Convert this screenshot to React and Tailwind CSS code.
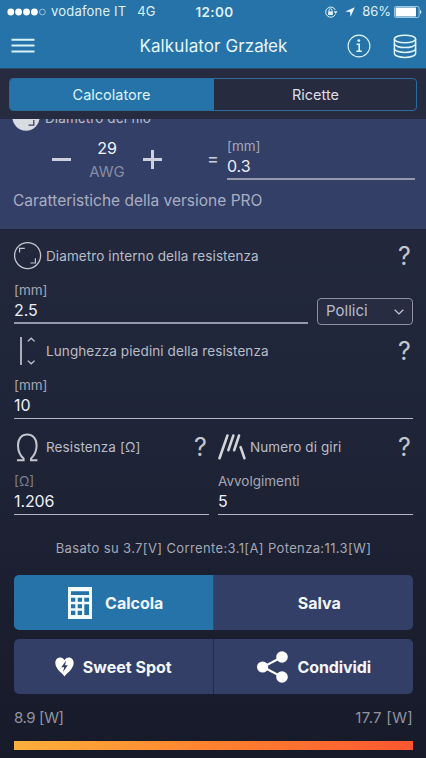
import React, { useState } from 'react';

const MenuIcon = () => (
  <svg width="24" height="16" viewBox="0 0 24 16" stroke="#d9f3fb" strokeWidth="2">
    <path d="M0.5 1.7H23.5M0.5 7.6H23.5M0.5 13.4H23.5" />
  </svg>
);

const InfoIcon = () => (
  <svg width="24" height="24" viewBox="0 0 24 24" fill="none" stroke="#dff5fc">
    <circle cx="12" cy="12" r="10.9" strokeWidth="1.1" />
    <circle cx="11.8" cy="6.6" r="1.4" fill="#dff5fc" stroke="none" />
    <path d="M9.6 10.2H12.2V17.4M9.4 17.3H14.8" strokeWidth="1.6" />
  </svg>
);

const DatabaseIcon = () => (
  <svg width="24" height="25" viewBox="0 0 24 25" fill="none" stroke="#dff5fc" strokeWidth="1.5">
    <ellipse cx="12" cy="5" rx="10.6" ry="3.8" />
    <path d="M1.4 5V19.4C1.4 21.5 6 23.4 12 23.4S22.6 21.5 22.6 19.4V5" />
    <path d="M1.4 9.6C1.4 11.9 6 13.6 12 13.6S22.6 11.9 22.6 9.6M1.4 14.4C1.4 16.7 6 18.4 12 18.4S22.6 16.7 22.6 14.4" />
  </svg>
);

const LockIcon = () => (
  <svg width="14" height="12" viewBox="0 0 14 12" fill="none" stroke="#dff1fa">
    <path d="M11.3 8.5A5.1 5.1 0 1 1 11.4 4" strokeWidth="1" />
    <path d="M9.6 5.3H13.6L11.6 8Z" fill="#dff1fa" stroke="none" />
    <rect x="4.1" y="5.3" width="4.8" height="3.7" fill="#dff1fa" stroke="none" />
    <path d="M5 5.5V4.2A1.5 1.5 0 0 1 8 4.2V5.5" strokeWidth="0.9" />
  </svg>
);

const LocationIcon = () => (
  <svg width="10" height="10" viewBox="0 0 10 10" fill="#e8f6fd">
    <path d="M9.8 0.2L5.6 9.8L5 5L0.2 4.4Z" />
  </svg>
);

const BatteryIcon = () => (
  <svg width="28" height="12" viewBox="0 0 28 12">
    <rect x="0.5" y="0.5" width="24.6" height="11" rx="1.6" fill="none" stroke="#a9d3ec" strokeWidth="0.9" />
    <rect x="1.6" y="1.6" width="20.4" height="8.8" rx="0.6" fill="#fff" />
    <path d="M26 4C27.8 4.4 27.8 7.6 26 8Z" fill="#cfe9f7" />
  </svg>
);

const DiameterIcon = () => (
  <svg width="28" height="28" viewBox="0 0 28 28" fill="none" stroke="#c3c6cf">
    <circle cx="13.6" cy="13.6" r="13" strokeWidth="1.3" />
    <path d="M5.6 10.5V6.4H10.8M16.5 21H21.4V16.2" strokeWidth="1.2" />
  </svg>
);

const WireIcon = () => (
  <svg width="28" height="28" viewBox="0 0 28 28">
    <circle cx="14" cy="14" r="13.7" fill="#dadce3" />
    <path d="M16.5 22.2H21.8V17" fill="none" stroke="#3a4266" strokeWidth="1.3" />
  </svg>
);

const LegsIcon = () => (
  <svg width="28" height="28" viewBox="0 0 28 28" fill="none" stroke="#c3c6cf">
    <path d="M7 0V28" strokeWidth="1.7" />
    <path d="M13.8 4.4L17.2 1.2L20.6 4.4M13.8 23.6L17.2 26.8L20.6 23.6" strokeWidth="1.3" />
  </svg>
);

const OhmIcon = () => (
  <svg width="28" height="29" viewBox="0 0 28 29" fill="none" stroke="#c3c6cf" strokeWidth="2">
    <path d="M3 27.2H9.6V25.6C6.2 22.5 4 18.4 4 12.4C4 5.4 7.8 1.5 13.2 1.5S22.6 5.4 22.6 12.4C22.6 18.4 20.2 22.5 17 25.6V27.2H23.4" />
  </svg>
);

const TurnsIcon = () => (
  <svg width="28" height="26" viewBox="0 0 28 26" stroke="#d3d5dc" strokeWidth="2.6" strokeLinecap="round">
    <path d="M9.4 1.6L1.5 24.2M15.3 1.6L10.4 16.2M21 1.6L16.2 16.2M22.6 13.2L26.4 24.2" />
  </svg>
);

const CalculatorIcon = () => (
  <svg width="24" height="32" viewBox="0 0 24 32">
    <path fill="#f2fbff" d="M0 0H24V32H0Z" />
    <path
      fill="#2573a8"
      d="M3 4.3H21V8H3ZM3 10.7H7.3V14.8H3ZM9.7 10.7H14V14.8H9.7ZM16.3 10.7H21V14.8H16.3ZM3 17.2H7.3V21.3H3ZM9.7 17.2H14V21.3H9.7ZM16.3 17.2H21V28H16.3ZM3 23.8H7.3V28H3ZM9.7 23.8H14V28H9.7Z"
    />
  </svg>
);

const HeartIcon = () => (
  <svg width="19" height="20" viewBox="0 0 19 20">
    <path fill="#fff" d="M9.5 19.6C8.5 17 0.3 12.5 0.3 5.8C0.3 2.7 2.5 0.5 5.2 0.5C7.2 0.5 8.8 1.6 9.5 3.3C10.2 1.6 11.8 0.5 13.8 0.5C16.5 0.5 18.7 2.7 18.7 5.8C18.7 12.5 10.5 17 9.5 19.6Z" />
    <path fill="#333f66" d="M11.2 3.4L6.3 10.2H9.2L8 15L12.9 8.3H10Z" />
  </svg>
);

const ShareIcon = () => (
  <svg width="31" height="32" viewBox="0 0 31 32" fill="#fff">
    <path d="M25 6L6 16L25 26" fill="none" stroke="#fff" strokeWidth="2" />
    <circle cx="5.6" cy="16" r="5.6" />
    <circle cx="25" cy="6" r="5.8" />
    <circle cx="25" cy="26" r="5.8" />
  </svg>
);

const Help = () => (
  <button className="-mr-px w-[19px] text-center text-[25px] leading-7 text-[#c3c6cf]">?</button>
);

const Title = ({ icon, children }) => (
  <div className="flex h-7 items-center">
    <span className="flex w-8 shrink-0 items-center">{icon}</span>
    <h2 className="grow whitespace-nowrap text-[13.5px] tracking-[0.1px] text-[#b9bcc8]">{children}</h2>
    <Help />
  </div>
);

const Field = ({ label, value, dim, thick }) => (
  <div className={thick ? 'h-[42px] grow border-b-2 border-[#9599a9]' : 'h-[42px] grow border-b border-[#b3b6c1]'}>
    <div className={dim ? 'text-[13.5px] leading-4 text-[#7c8090]' : 'text-[13.5px] leading-4 text-[#a5a8b6]'}>{label}</div>
    <div className="text-[16px] leading-[25px] tracking-[-0.1px] text-[#eceef5]">{value}</div>
  </div>
);

const App = () => {
  const [tab, setTab] = useState('calc');

  const tabClass = (name) =>
    tab === name
      ? 'bg-[#2573a8] pr-px text-[#dff3fb]'
      : 'pl-px text-[#dcdfe8]';

  return (
    <div className="flex h-[758px] w-[426px] flex-col overflow-hidden bg-linear-to-b from-[#262b3f] via-[#20263a] to-[#171a29] font-['Inter','Liberation_Sans',sans-serif]">
      <header className="h-[68px] shrink-0 bg-[#2573a8] text-[#dff1fa]">
        {/* Status bar */}
        <div className="grid h-6 grid-cols-[1fr_48px_1fr] items-center pl-[7px] pr-1 text-[13px]">
          <div className="flex items-center whitespace-nowrap">
            <svg className="shrink-0" width="40" height="8" viewBox="0 0 40 8" fill="#fff">
              <circle cx="3.8" cy="4" r="3.4" />
              <circle cx="11.6" cy="4" r="3.4" />
              <circle cx="19.5" cy="4" r="3.4" />
              <circle cx="27.4" cy="4" r="3.4" />
              <circle cx="35.4" cy="4" r="2.9" fill="none" stroke="#a9d3ec" strokeWidth="0.8" />
            </svg>
            <span className="ml-1 tracking-[0.2px]">vodafone IT</span>
            <span className="ml-[11px]">4G</span>
          </div>
          <div className="text-center text-[13.5px] font-semibold tracking-[0.4px]">12:00</div>
          <div className="flex items-center justify-end">
            <LockIcon />
            <span className="ml-[7px] mr-[7px]"><LocationIcon /></span>
            <span className="mr-[3px]">86%</span>
            <BatteryIcon />
          </div>
        </div>

        <div className="flex h-11 items-center pl-[11px] pr-[9px]">
          <button><MenuIcon /></button>
          <h1 className="grow pl-[45px] pt-px text-center text-[17px] tracking-[0.1px] text-[#e6f6fc]">Kalkulator Grzałek</h1>
          <button className="mr-[22px]"><InfoIcon /></button>
          <button><DatabaseIcon /></button>
        </div>
      </header>

      <div className="h-[51px] shrink-0 border-t border-[#2a4566] bg-[#262b3f] px-[9px] pt-[9px]">
        <div className="grid h-[33px] grid-cols-[204px_1fr] overflow-hidden rounded-[4px] border border-[#2c6c9b] text-[14.5px]">
          <button className={tabClass('calc')} onClick={() => setTab('calc')}>Calcolatore</button>
          <button className={tabClass('recipes')} onClick={() => setTab('recipes')}>Ricette</button>
        </div>
      </div>

      {/* Wire diameter, scrolled partly under the tabs */}
      <section className="h-[111px] shrink-0 overflow-hidden border-b border-[#1d2236] bg-[#333f66]">
        <div className="-mt-4 flex h-7 items-center pl-3">
          <WireIcon />
          <span className="ml-[5px] pt-0.5 text-[13.5px] tracking-[0.1px] text-[#b9bcc8]">Diametro del filo</span>
        </div>
        <div className="flex h-[50px] pt-[7px]">
          <button className="ml-[52px] mt-5 h-fit">
            <svg width="19" height="3" viewBox="0 0 19 3" fill="#cdd0dd"><path d="M0 0H19V3H0Z" /></svg>
          </button>
          <div className="-mt-0.5 w-[72px] text-center">
            <div className="text-[16px] leading-6 text-[#f2f4fa]">29</div>
            <div className="text-[15px] leading-6 text-[#868ca5]">AWG</div>
          </div>
          <button className="mt-3 h-fit">
            <svg width="19" height="19" viewBox="0 0 19 19" fill="#cdd0dd"><path d="M8 0H11V8H19V11H11V19H8V11H0V8H8Z" /></svg>
          </button>
          <span className="ml-[45px] mt-[9px] w-[11px] text-[18px] leading-6 text-[#cdd0dd]">=</span>
          <div className="ml-[9px] mr-[11px] grow">
            <Field label="[mm]" value="0.3" thick />
          </div>
        </div>
        <p className="mt-[10px] pl-[13px] text-[15.5px] leading-5 text-[#a9aec3]">Caratteristiche della versione PRO</p>
      </section>

      <main className="flex flex-col pl-[14px] pr-[13px] pt-[12px]">
        <Title icon={<DiameterIcon />}>Diametro interno della resistenza</Title>
        <div className="mt-3 flex">
          <Field label="[mm]" value="2.5" thick />
          <button className="ml-[9px] mt-[16px] flex h-[27px] w-24 items-center justify-between rounded-[4px] border border-[#8d91a1] bg-[#272c43] pl-2 pr-2 text-[15px] text-[#b9bcc8]">
            Pollici
            <svg width="10" height="6" viewBox="0 0 10 6" fill="none" stroke="#c3c6cf" strokeWidth="1.3">
              <path d="M0.7 0.7L5 4.9L9.3 0.7" />
            </svg>
          </button>
        </div>

        <div className="mt-3">
          <Title icon={<LegsIcon />}>Lunghezza piedini della resistenza</Title>
        </div>
        <div className="mt-3 flex">
          <Field label="[mm]" value="10" />
        </div>

        <div className="mt-[14px] grid grid-cols-2 gap-[9px]">
          <div>
            <Title icon={<OhmIcon />}>Resistenza [Ω]</Title>
            <div className="mt-3 flex">
              <Field label="[Ω]" value="1.206" dim />
            </div>
          </div>
          <div>
            <Title icon={<TurnsIcon />}>Numero di giri</Title>
            <div className="mt-3 flex">
              <Field label="Avvolgimenti" value="5" />
            </div>
          </div>
        </div>

        <p className="mt-[23px] text-center text-[13px] leading-5 tracking-[0.37px] text-[#a5a8b4]">
          Basato su 3.7[V] Corrente:3.1[A] Potenza:11.3[W]
        </p>

        <div className="mt-[17px] grid h-[55px] grid-cols-2 overflow-hidden rounded-[5px] text-[16px] font-bold text-[#f2f6fc]">
          <button className="flex items-center justify-center gap-[13px] border-r border-[#1f5480] bg-[#2573a8] pl-[5px]">
            <CalculatorIcon />
            Calcola
          </button>
          <button className="flex items-center justify-center bg-[#333f66] pl-[12px]">Salva</button>
        </div>
        <div className="mt-[9px] grid h-[55px] grid-cols-2 overflow-hidden rounded-[5px] text-[16px] font-bold text-[#f2f6fc]">
          <button className="flex items-center justify-center gap-[9px] border-r border-[#232a46] bg-[#333f66]">
            <HeartIcon />
            Sweet Spot
          </button>
          <button className="flex items-center justify-center gap-[10px] bg-[#333f66] pl-px tracking-[-0.1px]">
            <ShareIcon />
            Condividi
          </button>
        </div>

        <div className="mt-[14px] flex justify-between text-[15px] leading-5 text-[#9194a0]">
          <span className="tracking-[-0.4px]">8.9 [W]</span>
          <span className="tracking-[0.3px]">17.7 [W]</span>
        </div>
        <div className="mt-[13px] h-[9px] bg-linear-to-r from-[#fdb03c] via-[#ff812f] to-[#fc5630]" />
      </main>
    </div>
  );
};

export default App;
